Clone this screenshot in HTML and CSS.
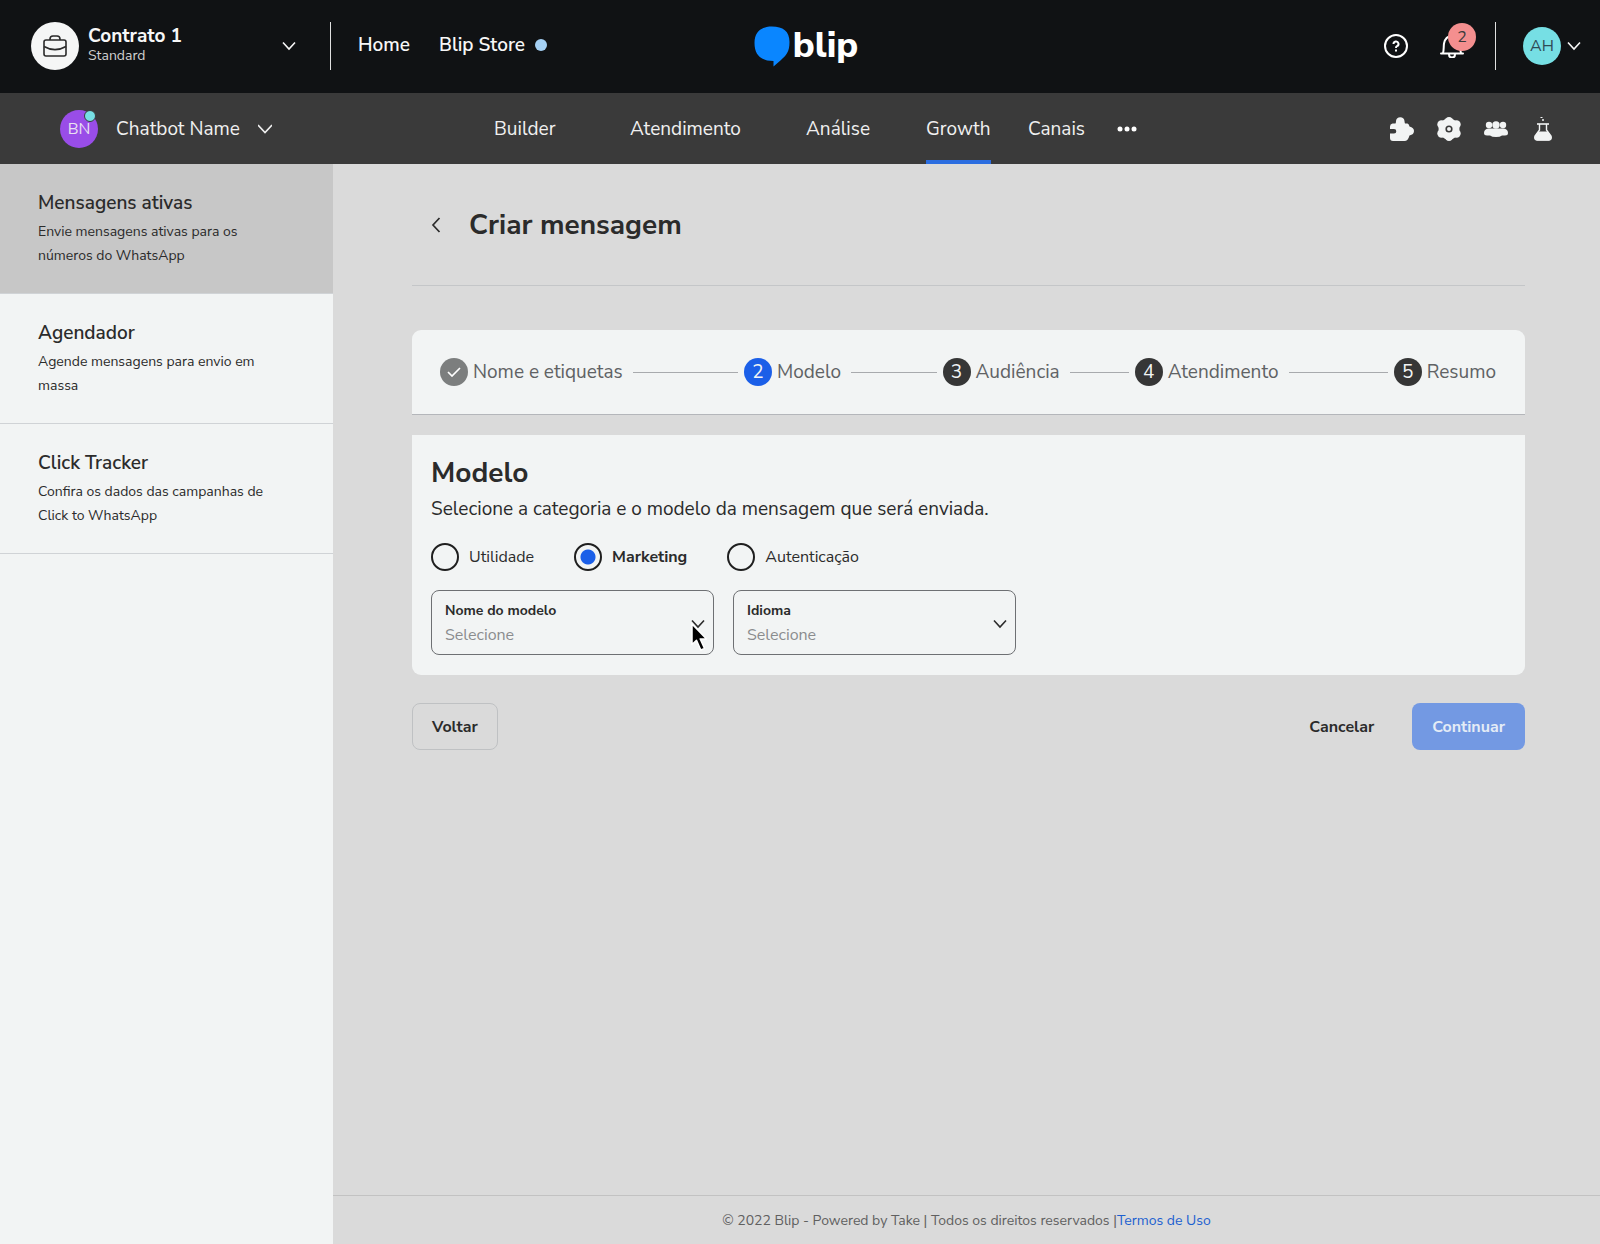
FILE: index.html
```html
<!DOCTYPE html>
<html lang="pt-BR">
<head>
<meta charset="utf-8">
<meta name="viewport" content="width=device-width, initial-scale=1">
<title>Blip - Criar mensagem</title>
<link rel="stylesheet" href="styles.css">
</head>
<body>
<header class="topbar">
  <div class="topbar-left">
    <button class="contract" type="button">
      <span class="contract-icon">
        <svg width="26" height="26" viewBox="0 0 26 26" fill="none" stroke="#2b2b2b" stroke-width="1.600" stroke-linejoin="round"><rect x="2" y="7" width="22" height="16" rx="2"/><path d="M8 7V6a3 3 0 0 1 3-3h4a3 3 0 0 1 3 3v1M2 13.500c7 4 15 4 22 0"/></svg>
      </span>
      <span class="contract-text">
        <span class="contract-name">Contrato 1</span>
        <span class="contract-plan">Standard</span>
      </span>
      <svg class="chevron" width="14" height="10" viewBox="0 0 14 10"><path d="M1 1.500l6 6.500 6-6.500"/></svg>
    </button>
    <nav class="top-links">
      <a href="#">Home</a>
      <a href="#">Blip Store<span class="store-dot"></span></a>
    </nav>
  </div>
  <a class="logo" href="#">
    <svg width="36" height="41" viewBox="0 0 36 41"><path fill="#0a86ff" d="M18 .5C29 .5 35.500 5 35.500 16C35.500 26 32 29.500 27 34L19.500 40.500V35C7 35 .5 29 .5 17C.5 5 8 .5 18 .5Z"/></svg>
    <span>blip</span>
  </a>
  <div class="topbar-right">
    <button class="icon-button" type="button" aria-label="Ajuda">
      <svg width="24" height="24" viewBox="0 0 24 24" fill="none" stroke="#fff" stroke-width="2"><circle cx="12" cy="12" r="11"/><path d="M9.500 10a2.500 2.500 0 1 1 3.500 2.200c-.8.400-1 .8-1 1.800"/><path d="M12 15.500v2"/></svg>
    </button>
    <button class="icon-button bell" type="button" aria-label="Notificações">
      <svg width="24" height="24" viewBox="0 0 24 24" fill="none" stroke="#fff" stroke-width="2" stroke-linecap="round"><path d="M1 19.500h22M3 19C4 16 3.500 13 4 9.500C5 4.500 8 2 12 2s7 3 8 8c.5 3 0 6 1 9M9 20.500a3 3 0 0 0 6 0"/></svg>
      <span class="badge">2</span>
    </button>
    <button class="account" type="button">
      <span class="avatar">AH</span>
      <svg class="chevron" width="14" height="10" viewBox="0 0 14 10"><path d="M1 1.500l6 6.500 6-6.500"/></svg>
    </button>
  </div>
</header>

<div class="subbar">
  <button class="bot" type="button">
    <span class="avatar avatar-bot">BN<span class="online"></span></span>
    <span>Chatbot Name</span>
    <svg class="chevron" width="14" height="10" viewBox="0 0 14 10"><path d="M0 1l7 7.500 7-7.500"/></svg>
  </button>
  <nav class="tabs">
    <a href="#">Builder</a>
    <a href="#">Atendimento</a>
    <a href="#">Análise</a>
    <a class="active" href="#">Growth</a>
    <a href="#">Canais</a>
    <a href="#" aria-label="Mais"><svg width="20" height="6" viewBox="0 0 20 6" fill="#fff"><circle cx="3" cy="3" r="2.500"/><circle cx="10" cy="3" r="2.500"/><circle cx="17" cy="3" r="2.500"/></svg></a>
  </nav>
  <div class="tools">
    <button class="icon-button" type="button" aria-label="Integrações">
      <svg width="24" height="24" viewBox="0 0 24 24" fill="#f2f4f4"><path d="M0 9.500Q0 7 2.500 6.500H5.500Q6 5.500 6 4a4.300 4.300 0 0 1 8.500 0q0 1 .5 2.500h2.500Q19 7 19.500 9.500q4.500 1 4.500 4.500t-4.500 4.500Q18 24 14.500 24H3q-3 0-3-3v-4.500h4a2.300 2.300 0 0 0 0-4.600H0Z"/></svg>
    </button>
    <button class="icon-button" type="button" aria-label="Configurações">
      <svg width="24" height="24" viewBox="0 0 24 24"><g fill="#f2f4f4"><circle cx="12" cy="12" r="10.500"/><circle cx="12" cy="4.200" r="4.200"/><circle cx="12" cy="19.800" r="4.200"/><circle cx="4.500" cy="7.500" r="4.200"/><circle cx="19.500" cy="7.500" r="4.200"/><circle cx="4.500" cy="16.500" r="4.200"/><circle cx="19.500" cy="16.500" r="4.200"/></g><circle cx="12" cy="12" r="2.800" fill="none" stroke="#3a3a3a" stroke-width="1.600"/></svg>
    </button>
    <button class="icon-button" type="button" aria-label="Equipe">
      <svg width="24" height="24" viewBox="0 0 24 24" fill="#f2f4f4"><circle cx="5" cy="8" r="3.200"/><circle cx="19" cy="8" r="3.200"/><circle cx="12" cy="8" r="3.700"/><path d="M0 16c0-3 2-4.500 5-4.500h14c3 0 5 1.500 5 4.500q0 2.500-3 2.500h-3q-2 1.500-6 1.500t-6-1.500H3q-3 0-3-2.500Z"/></svg>
    </button>
    <button class="icon-button" type="button" aria-label="Laboratório">
      <svg width="24" height="24" viewBox="0 0 24 24" fill="none" stroke="#f2f4f4"><path d="M6 7h12" stroke-width="1.600"/><path d="M8.500 7v6L4 19q-1 4 2 4h12q3 0 2-4l-4.500-6V7" stroke-width="1.400"/><path d="M7 15h10l3 5q0 3-2 3H6q-2 0-2-3Z" fill="#f2f4f4"/><circle cx="12" cy="3" r="1" fill="#f2f4f4" stroke="none"/><path d="M9.500 .5h2"/></svg>
    </button>
  </div>
</div>

<div class="layout">
  <aside class="sidebar">
    <a class="side-item selected" href="#">
      <strong>Mensagens ativas</strong>
      <span>Envie mensagens ativas para os números do WhatsApp</span>
    </a>
    <a class="side-item" href="#">
      <strong>Agendador</strong>
      <span>Agende mensagens para envio em massa</span>
    </a>
    <a class="side-item" href="#">
      <strong>Click Tracker</strong>
      <span>Confira os dados das campanhas de Click to WhatsApp</span>
    </a>
  </aside>

  <div class="page">
    <main class="content">
      <div class="page-head">
        <button class="back" type="button" aria-label="Voltar para a lista"><svg width="10" height="16" viewBox="0 0 10 16" fill="none" stroke="#2b2b2b" stroke-width="1.700"><path d="M8.500 1L2 8l6.500 7"/></svg></button>
        <h1>Criar mensagem</h1>
      </div>

      <ol class="stepper">
        <li class="step done"><span class="step-mark"><svg width="14" height="10" viewBox="0 0 14 10" fill="none" stroke="#fff" stroke-width="1.700"><path d="M1 5l4 4 8-8"/></svg></span>Nome e etiquetas</li>
        <li class="line line-first" role="presentation"></li>
        <li class="step current"><span class="step-mark">2</span>Modelo</li>
        <li class="line line-second" role="presentation"></li>
        <li class="step"><span class="step-mark">3</span>Audiência</li>
        <li class="line line-third" role="presentation"></li>
        <li class="step"><span class="step-mark">4</span>Atendimento</li>
        <li class="line line-fourth" role="presentation"></li>
        <li class="step"><span class="step-mark">5</span>Resumo</li>
      </ol>

      <section class="card">
        <h2>Modelo</h2>
        <p>Selecione a categoria e o modelo da mensagem que será enviada.</p>
        <div class="radios">
          <label><input type="radio" name="categoria">Utilidade</label>
          <label><input type="radio" name="categoria" checked><b>Marketing</b></label>
          <label><input type="radio" name="categoria">Autenticação</label>
        </div>
        <div class="fields">
          <div class="field">
            <label for="modelo">Nome do modelo</label>
            <select id="modelo"><option>Selecione</option></select>
            <svg class="chevron" width="14" height="10" viewBox="0 0 14 10"><path d="M1 1.500l6 6.500 6-6.500"/></svg>
            <svg class="pointer" width="20" height="30" viewBox="0 0 20 30"><path fill="#000" stroke="#fff" stroke-width="1.500" stroke-linejoin="round" d="M2 1v20.500l4.500-4.300 4.300 9.800 3.700-1.600-4.300-9.400H16.500Z"/></svg>
          </div>
          <div class="field">
            <label for="idioma">Idioma</label>
            <select id="idioma"><option>Selecione</option></select>
            <svg class="chevron" width="14" height="10" viewBox="0 0 14 10"><path d="M1 1.500l6 6.500 6-6.500"/></svg>
          </div>
        </div>
      </section>

      <div class="actions">
        <button class="btn btn-outline" type="button">Voltar</button>
        <button class="btn btn-text" type="button">Cancelar</button>
        <button class="btn btn-primary" type="button" disabled>Continuar</button>
      </div>
    </main>
    <footer class="footer">© 2022 Blip - Powered by Take | Todos os direitos reservados |<a href="#">Termos de Uso</a></footer>
  </div>
</div>
</body>
</html>
```

FILE: styles.css
```css
* { box-sizing: border-box; }
body {
  margin: 0;
  min-height: 100vh;
  display: flex;
  flex-direction: column;
  background: #dadada;
  color: #2b2b2b;
  font: 19px/24px "Nunito Sans", "Open Sans", "Noto Sans", sans-serif;
}
button, select { font: inherit; color: inherit; }
button { border: 0; padding: 0; background: none; cursor: pointer; }
a { color: inherit; text-decoration: none; }
svg { display: block; flex: none; }
h1, h2, p, ol { margin: 0; padding: 0; }
.chevron { fill: none; stroke: currentColor; stroke-width: 1.6; }

/* Top bar */
.topbar {
  height: 93px;
  padding: 0 19px 1px 31px;
  display: grid;
  grid-template-columns: 1fr auto 1fr;
  align-items: center;
  background: #101214;
  color: #f7f7f7;
}
.topbar-left { display: flex; align-items: center; }
.contract {
  width: 300px;
  height: 48px;
  padding-right: 34px;
  display: flex;
  align-items: center;
  gap: 9px;
  border-right: 1px solid #e0e0e0;
  text-align: left;
}
.contract .chevron { margin-left: auto; }
.contract-icon {
  width: 48px;
  height: 48px;
  display: grid;
  place-items: center;
  border-radius: 50%;
  background: #f5f6f6;
}
.contract-text { display: flex; flex-direction: column; padding-bottom: 2px; }
.contract-name { font-weight: 700; line-height: 22px; }
.contract-plan { font-size: 14px; line-height: 18px; color: #d0d0d0; }
.top-links {
  padding: 0 0 2px 27px;
  display: flex;
  gap: 29px;
  font-weight: 600;
}
.top-links a { display: flex; align-items: center; gap: 10px; }
.store-dot {
  width: 12px;
  height: 12px;
  border-radius: 50%;
  background: #a5d1f5;
}
.logo {
  display: flex;
  align-items: center;
  gap: 3px;
  color: #fff;
  font: 800 36px/40px "Nunito Sans", "Lato", sans-serif;
}
.topbar-right { display: flex; align-items: center; justify-content: flex-end; }
.icon-button { width: 24px; height: 24px; }
.bell { position: relative; margin: 0 31px 0 32px; }
.badge {
  position: absolute;
  left: 8px;
  top: -11px;
  width: 28px;
  height: 28px;
  border-radius: 50%;
  background: #f48f8f;
  color: #3a3a3a;
  font-size: 16px;
  line-height: 28px;
}
.account {
  height: 48px;
  padding-left: 27px;
  display: flex;
  align-items: center;
  gap: 6px;
  border-left: 1px solid #e0e0e0;
}
.avatar {
  width: 38px;
  height: 38px;
  border-radius: 50%;
  background: #76dfe4;
  color: #2f4a55;
  font-size: 16px;
  line-height: 38px;
}

/* Bot bar */
.subbar {
  height: 71px;
  padding-right: 45px;
  display: flex;
  align-items: stretch;
  background: #3a3a3a;
  color: #f0f0f0;
}
.bot {
  width: 494px;
  padding-left: 60px;
  display: flex;
  align-items: center;
  gap: 18px;
}
.avatar-bot {
  position: relative;
  background: #994de8;
  color: #e8e0f0;
}
.online {
  position: absolute;
  top: 0;
  right: 2px;
  width: 12px;
  height: 12px;
  border: 1px solid #3a3a3a;
  border-radius: 50%;
  background: #76dfe4;
}
.tabs {
  display: grid;
  grid-template-columns: 136px 176px 120px 102px 89px 20px;
  justify-items: start;
}
.tabs a { display: flex; align-items: center; border: solid transparent; border-width: 4px 0; }
.tabs .active { border-bottom-color: #2b6de0; }
.tools { margin-left: auto; display: flex; align-items: center; gap: 23px; }

/* Sidebar */
.layout { flex: 1; display: flex; }
.sidebar { width: 333px; flex: none; background: #f2f4f4; }
.side-item {
  padding: 27px 52px 25px 38px;
  display: flex;
  flex-direction: column;
  gap: 5px;
  border-bottom: 1px solid #d0d3d6;
}
.side-item strong { font-weight: 600; }
.side-item span { font-size: 14px; }
.selected { background: #c7c7c7; }

/* Page */
.page { flex: 1; display: flex; flex-direction: column; }
.content { flex: 1; padding: 0 75px 0 79px; }
.page-head {
  height: 122px;
  padding: 0 0 0 19px;
  display: flex;
  align-items: center;
  gap: 28px;
  border-bottom: 1px solid #c4c6c8;
}
h1, h2 { font-size: 28px; line-height: 36px; font-weight: 700; }

.stepper {
  height: 85px;
  margin: 44px 0 20px;
  padding: 0 29px 0 28px;
  display: flex;
  align-items: center;
  gap: 10px;
  list-style: none;
  background: #f2f4f4;
  border-bottom: 1px solid #b4b6ba;
  border-radius: 9px 9px 0 0;
}
.step { display: flex; align-items: center; gap: 5px; color: #606264; }
.step-mark {
  width: 28px;
  height: 28px;
  display: grid;
  place-items: center;
  border-radius: 50%;
  background: #363636;
  color: #f2f4f4;
}
.done .step-mark { background: #7c7e7e; }
.current .step-mark { background: #1b5fe8; }
.line { height: 1px; margin-right: -4px; background: #a8aaad; }
.line-first { flex: 107; }
.line-second { flex: 87; }
.line-third { flex: 60; }
.line-fourth { flex: 101; }

.card {
  padding: 20px 19px;
  background: #f2f4f4;
  border-radius: 0 0 9px 9px;
}
.card p { margin-top: 6px; }
.radios { margin: 22px 0 19px; display: flex; gap: 40px; font-size: 16px; }
.radios label { display: flex; align-items: center; gap: 10px; }
.radios b { font-weight: 700; }
.radios input {
  appearance: none;
  width: 28px;
  height: 28px;
  margin: 0;
  border: 2px solid #1f1f1f;
  border-radius: 50%;
}
.radios input:checked { background: radial-gradient(circle, #1b5fe8 7px, transparent 8px); }
.fields { display: flex; gap: 19px; }
.field {
  position: relative;
  width: 283px;
  height: 65px;
  padding: 8px 13px;
  display: flex;
  flex-direction: column;
  border: 1px solid #6e7073;
  border-radius: 8px;
}
.field label { font-size: 14px; font-weight: 700; }
.field select {
  appearance: none;
  border: 0;
  padding: 0;
  background: none;
  color: #8a8c8e;
  font-size: 16px;
}
.field .chevron { position: absolute; right: 8px; top: 28px; pointer-events: none; }
.pointer { position: absolute; right: 3px; top: 32px; pointer-events: none; }

.actions { margin-top: 28px; display: flex; gap: 18px; }
.btn {
  height: 47px;
  padding: 0 19px;
  border: 1px solid transparent;
  border-radius: 8px;
  font-size: 16px;
  font-weight: 700;
}
.btn-outline { border-color: #bfc1c3; }
.btn-text { margin-left: auto; }
.btn-primary { background: #7399e3; color: #e4ecf6; }

.footer {
  height: 49px;
  border-top: 1px solid #c2c2c2;
  color: #606060;
  font-size: 14px;
  line-height: 50px;
  text-align: center;
}
.footer a { color: #1c5fd0; }
```
